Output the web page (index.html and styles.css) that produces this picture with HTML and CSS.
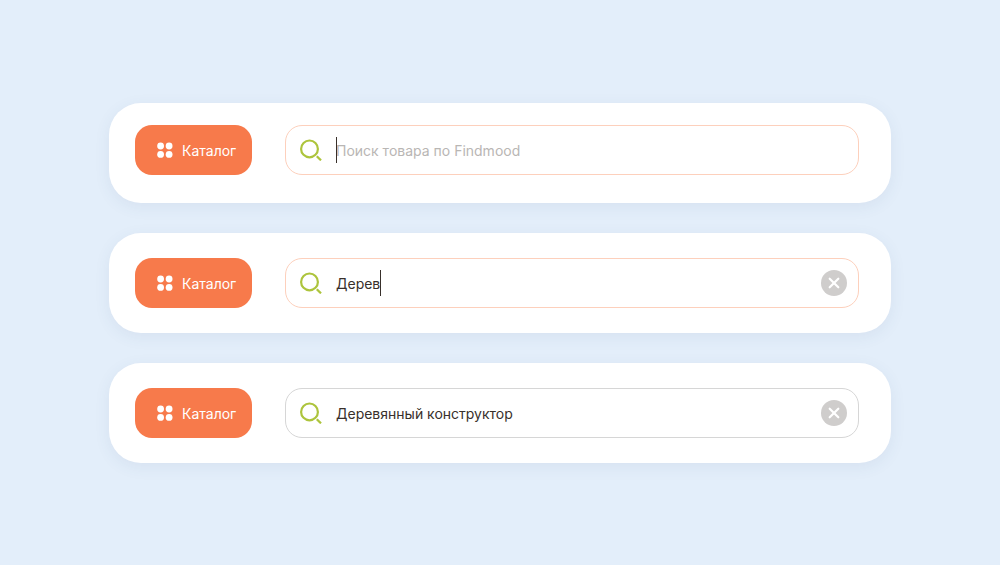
FILE: index.html
```
<!DOCTYPE html>
<html lang="ru">
<head>
    <meta charset="UTF-8">
    <meta name="viewport" content="width=device-width, initial-scale=1.0">
    <title>Findmood</title>
    <link rel="stylesheet" href="styles.css">
</head>
<body>

<svg class="sprite" aria-hidden="true">
    <symbol id="icon-grid" viewBox="0 0 16 16">
        <circle cx="3.6" cy="4" r="3.4"/>
        <circle cx="12.1" cy="4" r="3.4"/>
        <circle cx="3.6" cy="12.4" r="3.4"/>
        <circle cx="12.1" cy="12.4" r="3.4"/>
    </symbol>
    <symbol id="icon-search" viewBox="0 0 22 22">
        <circle cx="9.5" cy="9.9" r="8.4"/>
        <path d="M16.8 17.2l4.2 4.2"/>
    </symbol>
    <symbol id="icon-clear" viewBox="0 0 26 26">
        <path d="M8.7 8.7l8.6 8.6M17.3 8.7l-8.6 8.6"/>
    </symbol>
</svg>

<main class="page">
    <form class="bar bar-raised">
        <button type="button" class="catalog-btn">
            <svg class="icon-grid"><use href="#icon-grid"/></svg>
            Каталог
        </button>
        <div class="search search-active">
            <label for="search-empty"><svg class="icon-search" role="img" aria-label="Поиск"><use href="#icon-search"/></svg></label>
            <div class="search-text">
                <input type="text" id="search-empty" placeholder="Поиск товара по Findmood">
                <span class="caret"></span>
            </div>
        </div>
    </form>

    <form class="bar">
        <button type="button" class="catalog-btn">
            <svg class="icon-grid"><use href="#icon-grid"/></svg>
            Каталог
        </button>
        <div class="search search-active">
            <label for="search-typing"><svg class="icon-search" role="img" aria-label="Поиск"><use href="#icon-search"/></svg></label>
            <div class="search-text">
                <input type="text" id="search-typing" value="Дерев">
                <span class="caret caret-end"></span>
            </div>
            <button type="reset" class="clear-btn" aria-label="Очистить">
                <svg class="icon-clear"><use href="#icon-clear"/></svg>
            </button>
        </div>
    </form>

    <form class="bar">
        <button type="button" class="catalog-btn">
            <svg class="icon-grid"><use href="#icon-grid"/></svg>
            Каталог
        </button>
        <div class="search">
            <label for="search-filled"><svg class="icon-search" role="img" aria-label="Поиск"><use href="#icon-search"/></svg></label>
            <div class="search-text">
                <input type="text" id="search-filled" value="Деревянный конструктор">
            </div>
            <button type="reset" class="clear-btn" aria-label="Очистить">
                <svg class="icon-clear"><use href="#icon-clear"/></svg>
            </button>
        </div>
    </form>
</main>

</body>
</html>
```
FILE: styles.css
```
* {
    box-sizing: border-box;
}

body {
    margin: 0;
    min-height: 100vh;
    background-color: #e3eefa;
    font-family: Inter, 'Liberation Sans', sans-serif;
    font-size: 14px;
    color: #38302b;
}

.sprite {
    display: none;
}

.page {
    display: flex;
    flex-direction: column;
    gap: 30px;
    padding: 103px 109px;
}

.bar {
    display: flex;
    gap: 33px;
    padding: 25px 32px 25px 26px;
    background-color: #fff;
    border-radius: 32px;
    box-shadow: 0 4px 16px rgba(60, 90, 130, 0.08);
}

.bar-raised {
    padding-top: 22px;
    padding-bottom: 28px;
}

.catalog-btn {
    display: flex;
    align-items: center;
    gap: 9px;
    width: 117px;
    height: 50px;
    padding: 0 0 0 22px;
    border: none;
    border-radius: 17px;
    background-color: #f77a4b;
    color: #fff;
    font: inherit;
    cursor: pointer;
}

.icon-grid {
    width: 16px;
    height: 16px;
    fill: #fff;
}

.search {
    flex: 1;
    display: flex;
    align-items: center;
    gap: 14px;
    height: 50px;
    padding: 0 11px 0 14px;
    border: 1px solid #d6d6d6;
    border-radius: 17px;
}

.search-active {
    border-color: #fdd0bc;
}

.icon-search {
    display: block;
    width: 22px;
    height: 22px;
    fill: none;
    stroke: #adc43c;
    stroke-width: 2.2;
}

.search-text {
    position: relative;
    flex: 1;
    display: flex;
}

input[type="text"] {
    width: 100%;
    height: 26px;
    padding: 0;
    border: none;
    outline: none;
    background: none;
    color: inherit;
    font: inherit;
}

input[type="text"]::placeholder {
    color: #b9b6b4;
    opacity: 1;
}

.caret {
    position: absolute;
    top: 0;
    left: 0;
    width: 1px;
    height: 26px;
    background-color: #38302b;
}

/* right after the typed letters */
.caret-end {
    left: 44px;
}

.clear-btn {
    display: flex;
    width: 26px;
    height: 26px;
    padding: 0;
    border: none;
    border-radius: 50%;
    background-color: #cfcdcc;
    cursor: pointer;
}

.icon-clear {
    width: 26px;
    height: 26px;
    stroke: #fff;
    stroke-width: 2.2;
    stroke-linecap: round;
}
```
